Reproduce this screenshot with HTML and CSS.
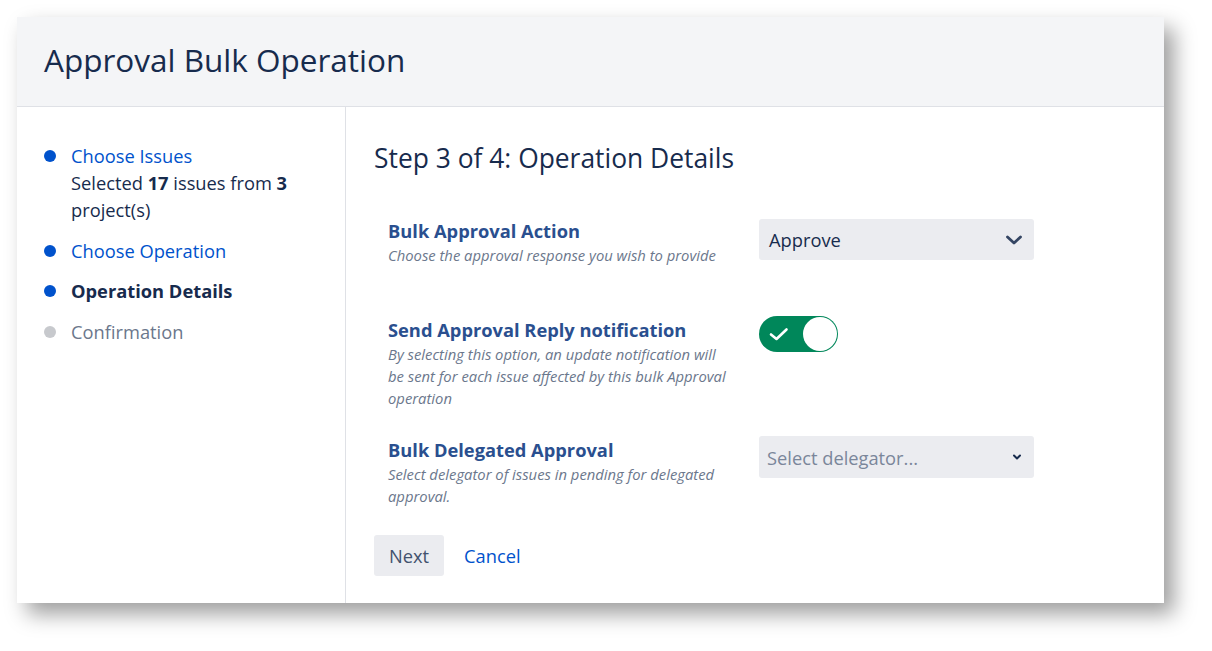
FILE: index.html
```html
<html>
<head>
    <title>Approval Bulk Operation</title>
    <link rel="stylesheet" href="styles.css">
</head>
<body>
<div id="dialog">
    <div id="header">
        <h1>Approval Bulk Operation</h1>
    </div>
    <div id="content">
        <div id="steps">
            <div class="step done">
                <span class="dot"></span>
                <div>
                    <a href="#">Choose Issues</a>
                    <div class="summary">Selected <b>17</b> issues from <b>3</b> project(s)</div>
                </div>
            </div>
            <div class="step done">
                <span class="dot"></span>
                <a href="#">Choose Operation</a>
            </div>
            <div class="step current">
                <span class="dot"></span>
                <span>Operation Details</span>
            </div>
            <div class="step todo">
                <span class="dot"></span>
                <span>Confirmation</span>
            </div>
        </div>
        <div id="main">
            <h2>Step 3 of 4: Operation Details</h2>
            <div class="row first">
                <div class="label">
                    <div class="title">Bulk Approval Action</div>
                    <div class="desc">Choose the approval response you wish to provide</div>
                </div>
                <div class="field">
                    <div class="select">
                        <span>Approve</span>
                        <svg width="16" height="16" viewBox="0 0 16 16"><path d="M1.5 5 L8 11 L14.5 5" fill="none" stroke="#344563" stroke-width="2.8" stroke-linecap="round" stroke-linejoin="round"/></svg>
                    </div>
                </div>
            </div>
            <div class="row">
                <div class="label">
                    <div class="title">Send Approval Reply notification</div>
                    <div class="desc">By selecting this option, an update notification will be sent for each issue affected by this bulk Approval operation</div>
                </div>
                <div class="field">
                    <div class="toggle">
                        <svg width="22" height="22" viewBox="0 0 22 22"><path d="M3 11.5 L8.5 16 L18.5 6.5" fill="none" stroke="#fff" stroke-width="2.6" stroke-linecap="round" stroke-linejoin="round"/></svg>
                        <span class="knob"></span>
                    </div>
                </div>
            </div>
            <div class="row last">
                <div class="label">
                    <div class="title">Bulk Delegated Approval</div>
                    <div class="desc">Select delegator of issues in pending for delegated approval.</div>
                </div>
                <div class="field">
                    <div class="select placeholder">
                        <span>Select delegator...</span>
                        <svg width="10" height="10" viewBox="0 0 10 10"><path d="M2 3.5 L5 6.5 L8 3.5" fill="none" stroke="#172b4d" stroke-width="2" stroke-linecap="round" stroke-linejoin="round"/></svg>
                    </div>
                </div>
            </div>
            <div id="buttons">
                <button>Next</button>
                <a href="#">Cancel</a>
            </div>
        </div>
    </div>
</div>
</body>
</html>
```

FILE: styles.css
```css
body {
    margin: 0;
    padding: 17px;
    background: #fff;
    font-family: "Open Sans", sans-serif;
    color: #172b4d;
}
#dialog {
    width: 1147px;
    height: 586px;
    background: #fff;
    box-shadow: 10px 11px 20px rgba(0, 0, 0, 0.38);
    display: flex;
    flex-direction: column;
}
#header {
    background: #f4f5f7;
    height: 90px;
    border-bottom: 1px solid #dfe1e6;
    padding: 0 0 4px 27px;
    box-sizing: border-box;
    display: flex;
    align-items: center;
}
h1 {
    margin: 0;
    font-size: 31.5px;
    font-weight: 500;
    color: #172b4d;
}
#content {
    flex: 1;
    display: flex;
}
#steps {
    width: 329px;
    border-right: 1px solid #dfe1e6;
    padding: 35px 30px 0 27px;
    box-sizing: border-box;
    font-size: 18.3px;
}
.step {
    display: flex;
    line-height: 27px;
    margin-bottom: 13.5px;
}
.dot {
    width: 12px;
    height: 12px;
    border-radius: 50%;
    background: #0052cc;
    flex: none;
    margin: 8px 15px 0 0;
}
.step a {
    color: #0052cc;
    text-decoration: none;
}
.summary {
    color: #172b4d;
}
.current {
    font-weight: bold;
}
.todo {
    color: #6b778c;
}
.todo .dot {
    background: #c7c9cd;
}
#main {
    flex: 1;
    padding: 34px 0 0 28px;
}
h2 {
    margin: 0 0 44px 0;
    font-size: 26.4px;
    font-weight: 500;
    line-height: 34px;
}
.row {
    display: flex;
    align-items: flex-start;
    padding: 0 0 29px 14px;
}
.row.first {
    padding-bottom: 52px;
}
.row.last {
    padding-bottom: 28px;
}
.label {
    width: 371px;
}
.title {
    font-size: 18.3px;
    font-weight: bold;
    color: #2a4f8f;
    line-height: 24px;
}
.desc {
    font-size: 14.8px;
    font-style: italic;
    color: #6b778c;
    line-height: 22px;
    padding-top: 1px;
    width: 340px;
}
.select {
    width: 275px;
    height: 41px;
    box-sizing: border-box;
    background: #ebecf0;
    border-radius: 3px;
    display: flex;
    align-items: center;
    justify-content: space-between;
    padding: 0 12px 0 10px;
    font-size: 18.3px;
    color: #172b4d;
}
.placeholder {
    height: 42px;
    margin-top: -2px;
    padding-left: 8px;
    color: #7a869a;
}
.toggle {
    width: 79px;
    height: 36px;
    box-sizing: border-box;
    border-radius: 18px;
    background: #00875a;
    display: flex;
    align-items: center;
    justify-content: space-between;
    padding: 0 1px 0 9px;
    margin-top: -2px;
}
.knob {
    width: 34px;
    height: 34px;
    border-radius: 50%;
    background: #fff;
}
#buttons {
    display: flex;
    align-items: center;
    gap: 20px;
}
button {
    width: 70px;
    height: 41px;
    border: none;
    border-radius: 3px;
    background: #ebecf0;
    color: #42526e;
    font-family: "Open Sans", sans-serif;
    font-size: 18.3px;
    padding: 0;
}
#buttons a {
    color: #0052cc;
    text-decoration: none;
    font-size: 18.3px;
}
```
